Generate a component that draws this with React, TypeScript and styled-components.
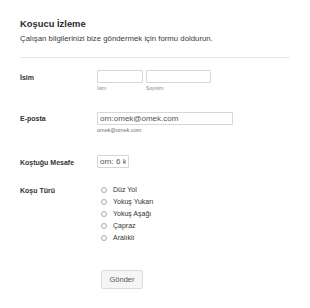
import React from 'react';
import styled, { createGlobalStyle } from 'styled-components';

const GlobalStyle = createGlobalStyle`
  html, body {
    margin: 0;
    padding: 0;
    background: #ffffff;
    font-family: "Liberation Sans", Arial, sans-serif;
    color: #333333;
  }
`;

const Page = styled.div`
  width: 310px;
  padding: 18px 20px 0 20px;
  box-sizing: border-box;
`;

const Header = styled.div`
  padding-bottom: 13px;
  border-bottom: 1px solid #e6e6e6;
`;

const Title = styled.h1`
  margin: 0;
  font-size: 9.4px;
  line-height: 12px;
  font-weight: bold;
  color: #2d2d2d;
`;

const Subtitle = styled.p`
  margin: 4px 0 0 0;
  font-size: 7.8px;
  line-height: 10px;
  color: #3a3a3a;
`;

const Row = styled.div<{ gap: number }>`
  display: flex;
  align-items: flex-start;
  margin-top: ${({ gap }) => gap}px;
`;

const Label = styled.label<{ top: number }>`
  width: 77px;
  flex-shrink: 0;
  padding-top: ${({ top }) => top}px;
  font-size: 7px;
  line-height: 9px;
  font-weight: bold;
  color: #333333;
`;

const Field = styled.div`
  display: flex;
  flex-direction: column;
`;

const NameGroup = styled.div`
  display: flex;
  gap: 3px;
`;

const Sub = styled.div`
  display: flex;
  flex-direction: column;
`;

const Input = styled.input<{ w: number }>`
  width: ${({ w }) => w}px;
  height: 13px;
  box-sizing: border-box;
  border: 1px solid #d6d6d6;
  border-radius: 1px;
  padding: 0 2px;
  margin: 0;
  font-family: "Liberation Sans", Arial, sans-serif;
  font-size: 8px;
  color: #333;
  outline: none;
  &::placeholder {
    color: #555;
  }
`;

const SubLabel = styled.span`
  margin-top: 2px;
  font-size: 5px;
  line-height: 6px;
  color: #8a8a8a;
`;

const Help = styled.span`
  margin-top: 2px;
  font-size: 5.5px;
  line-height: 7px;
  color: #6f6f6f;
`;

const RadioList = styled.div`
  display: flex;
  flex-direction: column;
  padding-left: 4px;
`;

const RadioRow = styled.label`
  display: flex;
  align-items: center;
  height: 12px;
  font-size: 7px;
  color: #333;
`;

const Circle = styled.span`
  width: 6px;
  height: 6px;
  border: 1px solid #a9a9a9;
  border-radius: 50%;
  box-sizing: border-box;
  margin-right: 6px;
  margin-top: 2px;
`;

const Button = styled.button`
  margin-left: 81px;
  width: 42px;
  height: 19px;
  box-sizing: border-box;
  background: #f5f5f5;
  border: 1px solid #dcdcdc;
  border-radius: 2px;
  font-family: "Liberation Sans", Arial, sans-serif;
  font-size: 7.5px;
  color: #555;
  padding: 0;
`;

const kinds = ['Düz Yol', 'Yokuş Yukarı', 'Yokuş Aşağı', 'Çapraz', 'Aralıklı'];

export default function App() {
  return (
    <>
      <GlobalStyle />
      <Page>
        <Header>
          <Title>Koşucu İzleme</Title>
          <Subtitle>Çalışan bilgilerinizi bize göndermek için formu doldurun.</Subtitle>
        </Header>

        <Row gap={12}>
          <Label top={3}>İsim</Label>
          <NameGroup>
            <Sub>
              <Input w={46} />
              <SubLabel>İsim</SubLabel>
            </Sub>
            <Sub>
              <Input w={65} />
              <SubLabel>Soyisim</SubLabel>
            </Sub>
          </NameGroup>
        </Row>

        <Row gap={21}>
          <Label top={2}>E-posta</Label>
          <Field>
            <Input w={136} placeholder="orn:omek@omek.com" />
            <Help>omek@omek.com</Help>
          </Field>
        </Row>

        <Row gap={21}>
          <Label top={3}>Koştuğu Mesafe</Label>
          <Input w={32} placeholder="orn: 6 km" />
        </Row>

        <Row gap={15}>
          <Label top={3}>Koşu Türü</Label>
          <RadioList>
            {kinds.map((k) => (
              <RadioRow key={k}>
                <Circle />
                {k}
              </RadioRow>
            ))}
          </RadioList>
        </Row>

        <Row gap={27}>
          <Button type="button">Gönder</Button>
        </Row>
      </Page>
    </>
  );
}
